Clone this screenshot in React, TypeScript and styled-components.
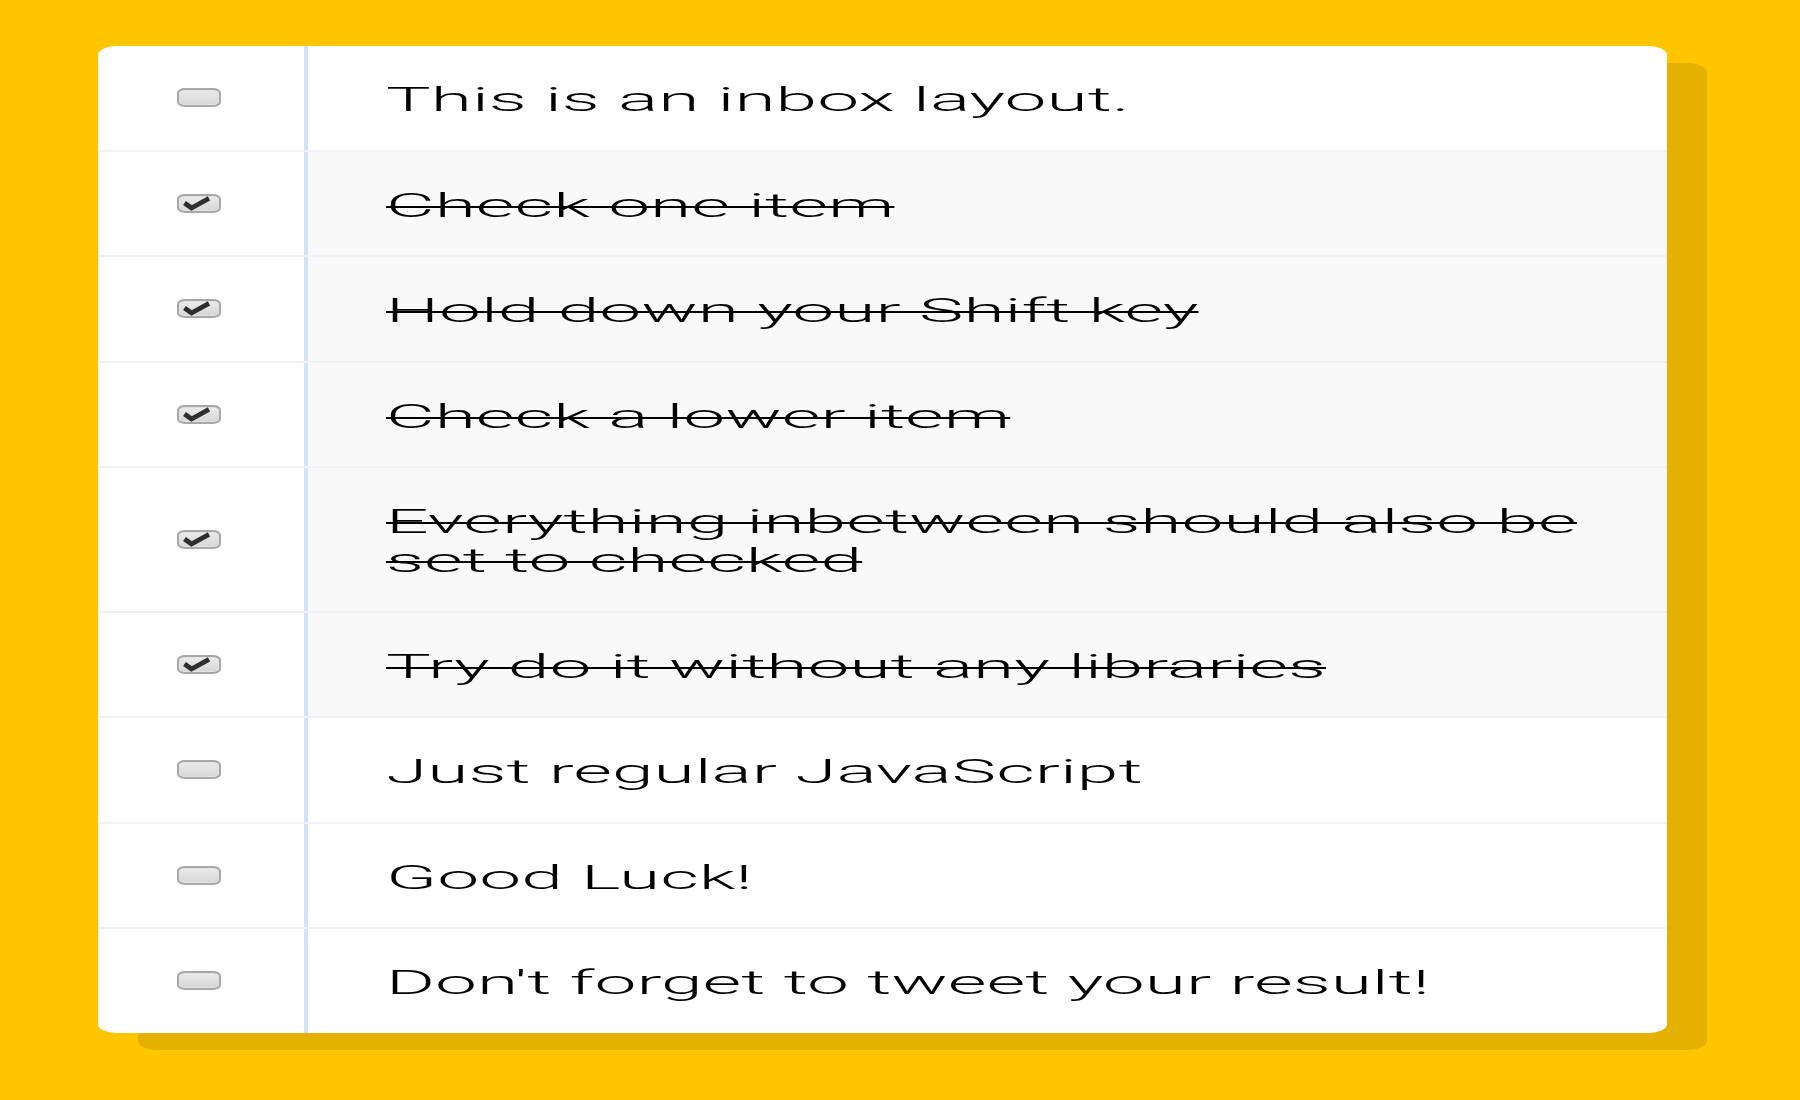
import React, { useState } from "react";
import styled, { createGlobalStyle } from "styled-components";

const GlobalStyle = createGlobalStyle`
  html, body {
    margin: 0;
    padding: 0;
    background: #ffc600;
  }
  body {
    font-family: "Liberation Sans", Arial, Helvetica, sans-serif;
    min-height: 100vh;
  }
`;

const STRETCH = 2.27;

const Inbox = styled.div`
  width: 1569px;
  margin: 46px 0 0 98px;
  background: #ffffff;
  border-radius: 18px / 9px;
  box-shadow: 40px 17px 0 rgba(0, 0, 0, 0.1);
  overflow: hidden;
`;

const Item = styled.div`
  display: flex;
  align-items: stretch;
  border-bottom: 2px solid #f1f1f1;
  &:last-child {
    border-bottom: 0;
  }
`;

const CheckCell = styled.label`
  flex: none;
  width: 206px;
  box-sizing: border-box;
  padding-left: 79px;
  display: flex;
  align-items: center;
  cursor: pointer;
`;

const HiddenInput = styled.input`
  appearance: none;
  width: 0;
  height: 0;
  margin: 0;
  border: 0;
  outline: none;
`;

const Box = styled.span`
  width: 44px;
  height: 19px;
  box-sizing: border-box;
  border: 2px solid #a8a8a8;
  border-radius: 8px / 5px;
  background: linear-gradient(#ebebeb, #d6d6d6);
  box-shadow: inset 0 0 0 1px #e2e2e2;
  display: flex;
  align-items: center;
  justify-content: center;
`;

const TextCell = styled.div<{ $checked: boolean }>`
  flex: 1;
  min-width: 0;
  border-left: 4px solid #d1e2ff;
  padding: 34px 80px 30.5px 78px;
  background: ${(p) => (p.$checked ? "#f9f9f9" : "transparent")};
  transition: background 0.2s;
`;

const Text = styled.p<{ $checked: boolean }>`
  margin: 0;
  width: calc(100% / ${STRETCH});
  transform: scaleX(${STRETCH});
  transform-origin: 0 0;
  font-family: Roboto, "Liberation Sans", Arial, sans-serif;
  font-size: 33px;
  line-height: 39px;
  font-weight: 300;
  color: #000000;
  text-decoration: ${(p) => (p.$checked ? "line-through" : "none")};
  text-decoration-thickness: 2px;
`;

const CheckMark = () => (
  <svg width="40" height="15" viewBox="0 0 40 15" aria-hidden="true">
    <path
      d="M5.5 7 L12.5 12 L30 2.4"
      fill="none"
      stroke="#2e2e2e"
      strokeWidth="4.8"
      strokeLinejoin="miter"
    />
  </svg>
);

const ITEMS = [
  "This is an inbox layout.",
  "Check one item",
  "Hold down your Shift key",
  "Check a lower item",
  "Everything inbetween should also be set to checked",
  "Try do it without any libraries",
  "Just regular JavaScript",
  "Good Luck!",
  "Don't forget to tweet your result!",
];

export default function App() {
  const [checked, setChecked] = useState<boolean[]>([
    false,
    true,
    true,
    true,
    true,
    true,
    false,
    false,
    false,
  ]);
  const [last, setLast] = useState<number | null>(null);

  const handleClick = (i: number, e: React.MouseEvent<HTMLInputElement>) => {
    const next = [...checked];
    next[i] = !next[i];
    if (e.shiftKey && last !== null && next[i]) {
      const [a, b] = last < i ? [last, i] : [i, last];
      for (let k = a; k <= b; k++) next[k] = true;
    }
    setChecked(next);
    setLast(i);
  };

  return (
    <>
      <GlobalStyle />
      <Inbox>
        {ITEMS.map((text, i) => (
          <Item key={i}>
            <CheckCell>
              <HiddenInput
                type="checkbox"
                checked={checked[i]}
                onChange={() => {}}
                onClick={(e) => handleClick(i, e)}
              />
              <Box>{checked[i] && <CheckMark />}</Box>
            </CheckCell>
            <TextCell $checked={checked[i]}>
              <Text $checked={checked[i]}>{text}</Text>
            </TextCell>
          </Item>
        ))}
      </Inbox>
    </>
  );
}
